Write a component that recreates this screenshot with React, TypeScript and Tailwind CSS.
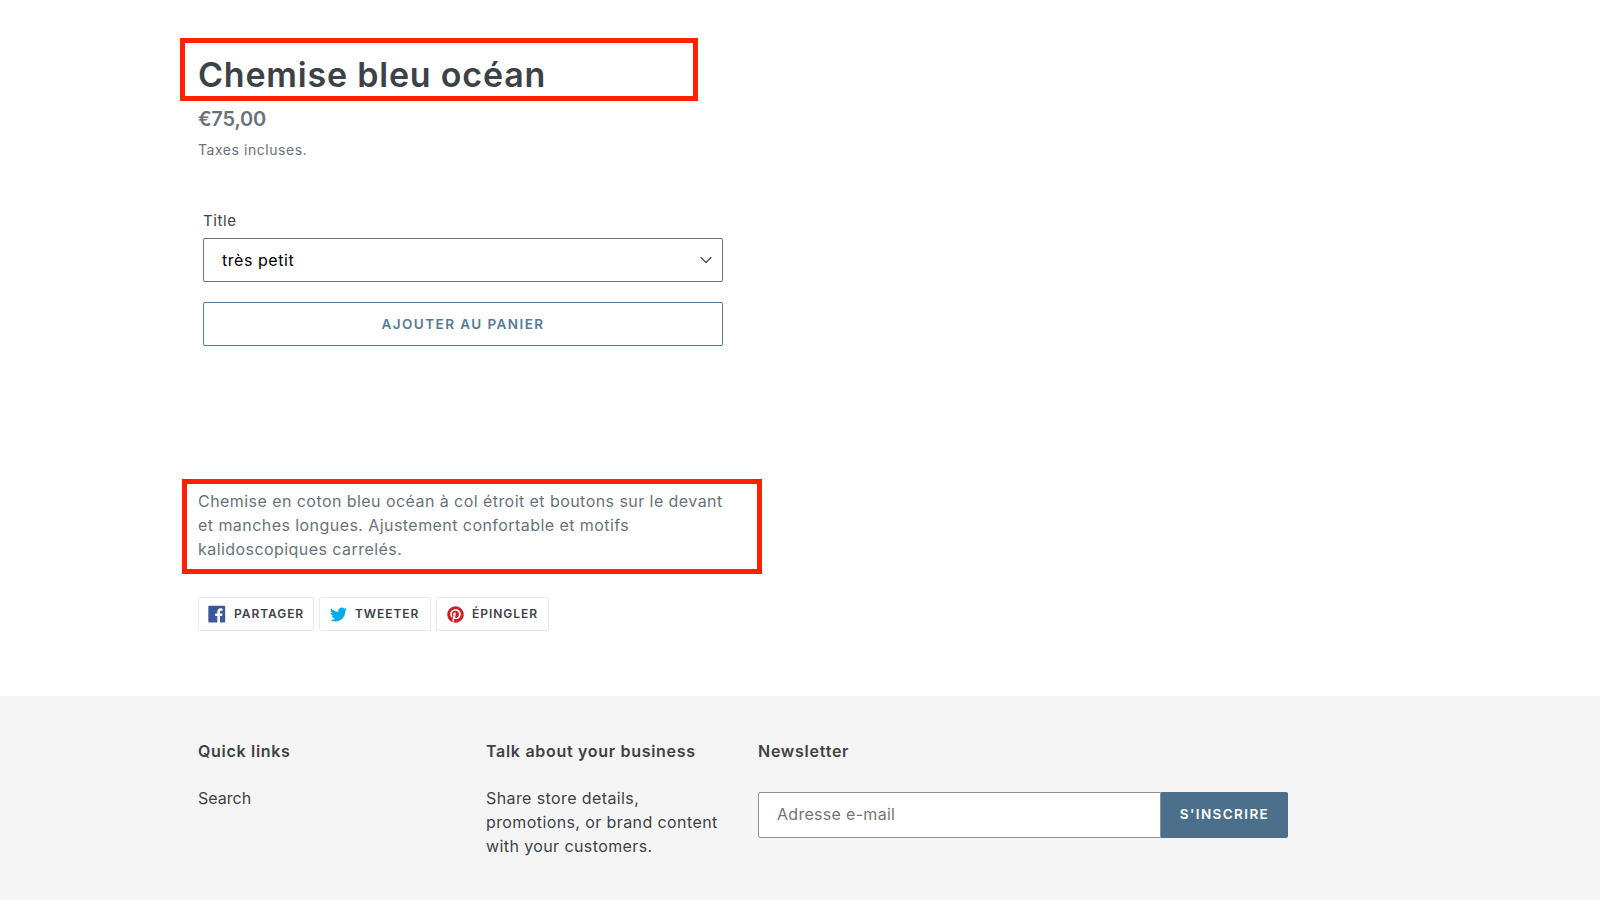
import { FaPinterest, FaTwitter } from 'react-icons/fa';
import { LuChevronDown } from 'react-icons/lu';

const FacebookIcon = () => (
  <svg viewBox="0 0 20 20" className="h-[18px] w-[18px] fill-[#3b5998]">
    <path d="M18.05.811q.439 0 .744.305t.305.744v16.637q0 .439-.305.744t-.744.305h-4.732v-7.221h2.415l.342-2.854h-2.757v-1.83q0-.659.293-1t1.073-.342h1.488V3.762q-.976-.098-2.171-.098-1.634 0-2.635.964t-1 2.72V9.47H7.951v2.854h2.415v7.221H1.413q-.439 0-.744-.305t-.305-.744V1.859q0-.439.305-.744T1.413.81H18.05z" />
  </svg>
);

const ShareButton = ({ icon, label, className }: { icon: React.ReactNode; label: string; className: string }) => (
  <a className={`flex h-[34px] items-center gap-[8px] rounded-[2px] border border-[#e8e9eb] text-[12px] font-semibold tracking-[0.95px] text-[#3d4246] ${className}`}>
    {icon}
    <span>{label}</span>
  </a>
);

const ProductForm = () => (
  <div className="ml-[23px] w-[520px]">
    <label className="block text-[15px] leading-[22px] tracking-[0.6px] text-[#3d4246]">Title</label>
    <div className="mt-[6px] flex h-[44px] items-center justify-between rounded-[2px] border border-[#69727b] pl-[18px] pr-[6px] text-[16px] tracking-[0.55px] text-black">
      <span>très petit</span>
      <LuChevronDown className="h-[20px] w-[20px]" strokeWidth={1.25} />
    </div>
    <button className="mt-[20px] block h-[44px] w-full rounded-[2px] border border-[#557b97] text-[13.5px] font-semibold tracking-[1.45px] text-[#557b97]">
      AJOUTER AU PANIER
    </button>
  </div>
);

const Footer = () => (
  <footer className="mt-[65px] h-[204px] bg-[#f5f5f5] pl-[198px] pt-[44px] text-[#3d4246]">
    <div className="flex">
      <div className="w-[288px]">
        <h4 className="text-[16px] font-semibold leading-[22px] tracking-[0.7px]">Quick links</h4>
        <p className="mt-[24px] text-[16px] leading-[24px]">Search</p>
      </div>
      <div className="w-[272px]">
        <h4 className="text-[16px] font-semibold leading-[22px] tracking-[0.7px]">Talk about your business</h4>
        <p className="mt-[24px] w-[240px] text-[16px] leading-[24px] tracking-[0.4px]">
          Share store details, promotions, or brand content with your customers.
        </p>
      </div>
      <div>
        <h4 className="text-[16px] font-semibold leading-[22px] tracking-[0.75px]">Newsletter</h4>
        <div className="mt-[30px] flex h-[46px]">
          <div className="flex w-[403px] items-center rounded-l-[2px] border border-[#919191] bg-white pb-[2px] pl-[18px] text-[16px] tracking-[0.3px] text-[#757575]">
            Adresse e-mail
          </div>
          <button className="w-[127px] rounded-r-[2px] bg-[#4c6f8c] pb-[2px] text-[13.5px] font-semibold tracking-[1.4px] text-white">
            S'INSCRIRE
          </button>
        </div>
      </div>
    </div>
  </footer>
);

export default function App() {
  return (
    <div className="min-h-[900px] overflow-hidden bg-white font-['Inter','Open_Sans',sans-serif]">
      <main className="pl-[180px] pt-[38px]">
        <div className="flex h-[63px] w-[518px] items-end border-[5px] border-[#ff2200] pl-[13px]">
          <h1 className="text-[34px] font-semibold leading-[42px] tracking-[0.8px] text-[#3d4246]">Chemise bleu océan</h1>
        </div>
        <p className="ml-[18px] mt-[6px] text-[20px] font-semibold leading-[24px] tracking-[-0.2px] text-[#69727b]">€75,00</p>
        <p className="ml-[18px] mt-[8px] text-[14px] leading-[22px] tracking-[0.55px] text-[#69727b]">Taxes incluses.</p>
        <div className="mt-[49px]">
          <ProductForm />
        </div>
        <div className="ml-[2px] mt-[133px] h-[95px] w-[580px] border-[5px] border-[#ff2200] pl-[11px] pt-[5px] text-[16px] leading-[24px] tracking-[0.44px] text-[#69727b]">
          <p className="w-[540px]">
            Chemise en coton bleu océan à col étroit et boutons sur le devant et manches longues. Ajustement confortable et motifs kalidoscopiques carrelés.
          </p>
        </div>
        <div className="ml-[18px] mt-[23px] flex gap-[5px]">
          <ShareButton className="w-[116px] pl-[9px]" label="PARTAGER" icon={<FacebookIcon />} />
          <ShareButton className="w-[112px] pl-[10px]" label="TWEETER" icon={<FaTwitter className="h-[17px] w-[17px] text-[#00aced]" />} />
          <ShareButton className="w-[113px] pl-[10px]" label="ÉPINGLER" icon={<FaPinterest className="h-[17px] w-[17px] text-[#cb2027]" />} />
        </div>
      </main>
      <Footer />
    </div>
  );
}
